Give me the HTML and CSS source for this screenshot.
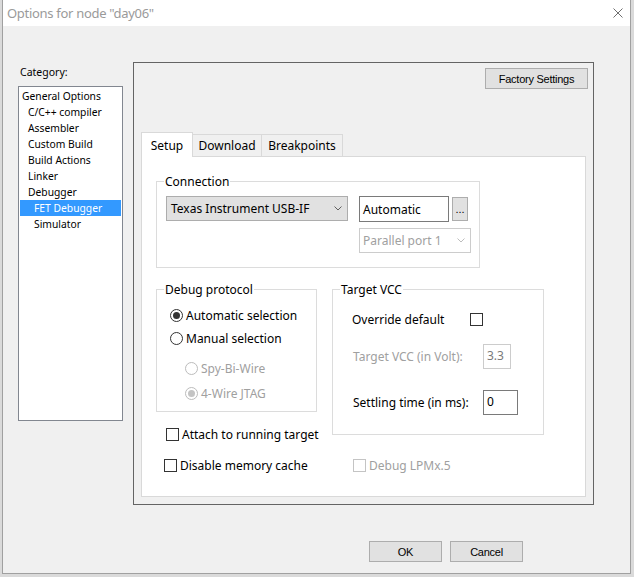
FILE: index.html
```html
<!DOCTYPE html>
<html>
<head>
<meta charset="utf-8">
<link rel="stylesheet" href="styles.css">
</head>
<body>
<div class="dialog">
  <div class="titlebar">
    <span class="title">Options for node "day06"</span>
    <svg class="close" width="10" height="10" viewBox="0 0 10 10"><path d="M0.5 0.5L9.5 9.5M9.5 0.5L0.5 9.5" stroke="#6f6f6f" stroke-width="1" fill="none"/></svg>
  </div>
  <div class="main">
    <div class="sidebar">
      <div class="cat-label">Category:</div>
      <div class="cat-list">
        <div class="cat-item">General Options</div>
        <div class="cat-item lvl1">C/C++ compiler</div>
        <div class="cat-item lvl1">Assembler</div>
        <div class="cat-item lvl1">Custom Build</div>
        <div class="cat-item lvl1">Build Actions</div>
        <div class="cat-item lvl1">Linker</div>
        <div class="cat-item lvl1">Debugger</div>
        <div class="cat-item lvl2 selected">FET Debugger</div>
        <div class="cat-item lvl2">Simulator</div>
      </div>
    </div>
    <div class="panel">
      <div class="factory-row"><div class="btn factory">Factory Settings</div></div>
      <div class="tabs">
        <div class="tab active tab-setup">Setup</div>
        <div class="tab tab-download">Download</div>
        <div class="tab tab-break">Breakpoints</div>
      </div>
      <div class="tab-panel">
        <div class="group conn-group">
          <div class="group-title">Connection</div>
          <div class="conn-row1">
            <div class="combo">
              <span>Texas Instrument USB-IF</span>
              <svg width="8" height="5" viewBox="0 0 8 5"><path d="M0.5 0.5L4 4L7.5 0.5" stroke="#606060" fill="none"/></svg>
            </div>
            <div class="textbox auto-box">Automatic</div>
            <div class="btn dots">...</div>
          </div>
          <div class="combo combo-dis">
            <span>Parallel port 1</span>
            <svg width="8" height="5" viewBox="0 0 8 5"><path d="M0.5 0.5L4 4L7.5 0.5" stroke="#bdbdbd" fill="none"/></svg>
          </div>
        </div>
        <div class="groups-row">
          <div class="left-col">
            <div class="group debug-group">
              <div class="group-title">Debug protocol</div>
              <div class="radio-row r1"><span class="radio on"></span><span>Automatic selection</span></div>
              <div class="radio-row r2"><span class="radio"></span><span>Manual selection</span></div>
              <div class="radio-row r3 dis"><span class="radio"></span><span>Spy-Bi-Wire</span></div>
              <div class="radio-row r4 dis"><span class="radio on"></span><span>4-Wire JTAG</span></div>
            </div>
            <div class="check-row attach"><span class="cb"></span><span>Attach to running target</span></div>
          </div>
          <div class="group vcc-group">
            <div class="group-title">Target VCC</div>
            <div class="override-row"><span class="override-label">Override default</span><span class="cb"></span></div>
            <div class="field-row vcc-row dis"><span class="field-label">Target VCC (in Volt):</span><div class="textbox small-box box-dis">3.3</div></div>
            <div class="field-row settle-row"><span class="field-label">Settling time (in ms):</span><div class="textbox small-box settle-box">0</div></div>
          </div>
        </div>
        <div class="bottom-row">
          <div class="check-row mem"><span class="cb"></span><span>Disable memory cache</span></div>
          <div class="check-row dis"><span class="cb"></span><span>Debug LPMx.5</span></div>
        </div>
      </div>
    </div>
  </div>
  <div class="footer">
    <div class="btn foot-btn">OK</div>
    <div class="btn foot-btn">Cancel</div>
  </div>
</div>
</body>
</html>
```
FILE: styles.css
```css
html, body {
  margin: 0;
  padding: 0;
}
body {
  width: 634px;
  height: 577px;
  overflow: hidden;
  background: #dadada;
  font-family: "Noto Sans", sans-serif;
  font-size: 12px;
  color: #000;
}
.dialog {
  margin-left: 2px;
  width: 629px;
  height: 574px;
  box-sizing: border-box;
  border: 1px solid #a0a0a0;
  border-top: none;
  background: #f0f0f0;
  display: flex;
  flex-direction: column;
}
.titlebar {
  height: 26px;
  flex: none;
  background: #fff;
  display: flex;
  align-items: center;
  justify-content: space-between;
  padding: 0 7px 0 4px;
}
.title {
  font-size: 13px;
  letter-spacing: -0.3px;
  color: #9a9a9a;
}
.close {
  display: block;
}
.main {
  display: flex;
  gap: 10px;
  padding: 36px 0 0 15px;
}
.sidebar {
  width: 105px;
}
.cat-label {
  margin-top: 2px;
  padding-left: 2px;
  height: 16px;
  line-height: 16px;
  font-size: 10.5px;
}
.cat-list {
  margin-top: 6px;
  height: 335px;
  box-sizing: border-box;
  border: 1px solid #828790;
  background: #fff;
  padding: 1px;
}
.cat-item {
  height: 16px;
  line-height: 16px;
  padding-left: 2px;
  font-size: 10.3px;
  white-space: nowrap;
}
.cat-item.lvl1 {
  padding-left: 8px;
}
.cat-item.lvl2 {
  padding-left: 14px;
}
.cat-item.selected {
  background: #3399ff;
  color: #fff;
}
.panel {
  width: 461px;
  height: 443px;
  box-sizing: border-box;
  border: 1px solid #646464;
}
.factory-row {
  display: flex;
  justify-content: flex-end;
  padding: 5px 5px 0 0;
}
.btn {
  height: 21px;
  box-sizing: border-box;
  border: 1px solid #adadad;
  background: #e1e1e1;
  font-family: "Liberation Sans", Arial, sans-serif;
  font-size: 11px;
  letter-spacing: -0.25px;
  display: flex;
  align-items: center;
  justify-content: center;
}
.factory {
  width: 103px;
}
.tabs {
  display: flex;
  align-items: flex-end;
  height: 24px;
  margin: 43px 0 0 7px;
}
.tab {
  height: 22px;
  box-sizing: border-box;
  border: 1px solid #d9d9d9;
  border-left: none;
  border-bottom: none;
  background: #f0f0f0;
  display: flex;
  align-items: center;
  justify-content: center;
}
.tab.active {
  height: 25px;
  margin-bottom: -1px;
  border-left: 1px solid #d9d9d9;
  background: #fff;
  position: relative;
  z-index: 1;
}
.tab-setup {
  width: 52px;
}
.tab-download {
  width: 69px;
}
.tab-break {
  width: 81px;
}
.tab-panel {
  margin-left: 7px;
  width: 445px;
  height: 341px;
  box-sizing: border-box;
  border: 1px solid #d9d9d9;
  background: #fff;
}
.group {
  box-sizing: border-box;
  border: 1px solid #dcdcdc;
}
.group-title {
  width: max-content;
  height: 16px;
  line-height: 16px;
  margin: -8px 0 0 7px;
  padding: 0 1px;
  background: #fff;
}
.conn-group {
  width: 324px;
  height: 87px;
  margin: 24px 0 0 14px;
}
.conn-row1 {
  display: flex;
  align-items: flex-start;
  margin-top: 6px;
  padding-left: 9px;
  height: 26px;
}
.combo {
  width: 182px;
  height: 25px;
  box-sizing: border-box;
  border: 1px solid #adadad;
  background: #e1e1e1;
  display: flex;
  align-items: center;
  justify-content: space-between;
  padding: 0 5px 0 4px;
  white-space: nowrap;
}
.combo svg {
  display: block;
}
.combo-dis {
  width: 112px;
  margin: 6px 0 0 202px;
  border-color: #cccccc;
  background: #fff;
  color: #a0a0a0;
  padding: 0 5px 0 3px;
}
.textbox {
  box-sizing: border-box;
  background: #fff;
  border: 1px solid #7a7a7a;
  display: flex;
  align-items: center;
  padding-left: 3px;
}
.auto-box {
  width: 90px;
  height: 26px;
  margin-left: 11px;
}
.dots {
  width: 16px;
  height: 24px;
  margin: 1px 0 0 3px;
  align-items: flex-end;
  padding-bottom: 5px;
  letter-spacing: 0;
}
.groups-row {
  display: flex;
  align-items: flex-start;
  gap: 15px;
  margin: 21px 0 0 14px;
}
.left-col {
  width: 161px;
}
.debug-group {
  height: 123px;
}
.radio-row {
  display: flex;
  align-items: center;
  height: 16px;
  white-space: nowrap;
}
.r1 {
  margin-top: 9px;
  padding-left: 13px;
}
.r2 {
  margin-top: 7px;
  padding-left: 13px;
}
.r3 {
  margin-top: 14px;
  padding-left: 28px;
}
.r4 {
  margin-top: 9px;
  padding-left: 28px;
}
.radio {
  flex: none;
  width: 13px;
  height: 13px;
  box-sizing: border-box;
  border: 1px solid #333;
  border-radius: 50%;
  background: #fff;
  margin-right: 3px;
  display: flex;
  align-items: center;
  justify-content: center;
}
.radio.on::after {
  content: "";
  width: 7px;
  height: 7px;
  border-radius: 50%;
  background: #333;
}
.dis {
  color: #a0a0a0;
}
.dis .radio {
  border-color: #bcbcbc;
}
.dis .radio.on::after {
  background: #c4c4c4;
}
.dis .cb {
  border-color: #c4c4c4;
}
.check-row {
  display: flex;
  align-items: center;
  height: 16px;
  white-space: nowrap;
}
.attach {
  margin-top: 14px;
  padding-left: 10px;
}
.cb {
  flex: none;
  width: 13px;
  height: 13px;
  box-sizing: border-box;
  border: 1px solid #333;
  background: #fff;
  margin-right: 3px;
}
.vcc-group {
  width: 212px;
  height: 146px;
}
.override-row {
  display: flex;
  align-items: center;
  height: 16px;
  margin-top: 13px;
  padding-left: 19px;
}
.override-label {
  width: 118px;
}
.field-row {
  display: flex;
  align-items: center;
  height: 25px;
  padding-left: 20px;
  white-space: nowrap;
}
.vcc-row {
  margin-top: 17px;
}
.settle-row {
  margin-top: 21px;
}
.field-label {
  width: 130px;
}
.small-box {
  height: 25px;
  align-items: flex-start;
  padding-top: 2px;
}
.box-dis {
  width: 28px;
  border-color: #cccccc;
  color: #7a7a7a;
}
.settle-box {
  width: 35px;
  color: #000;
}
.bottom-row {
  display: flex;
  align-items: center;
  height: 16px;
  margin: 15px 0 0 22px;
}
.mem {
  width: 189px;
}
.footer {
  display: flex;
  gap: 8px;
  margin: 36px 0 0 366px;
}
.foot-btn {
  width: 73px;
}
```
